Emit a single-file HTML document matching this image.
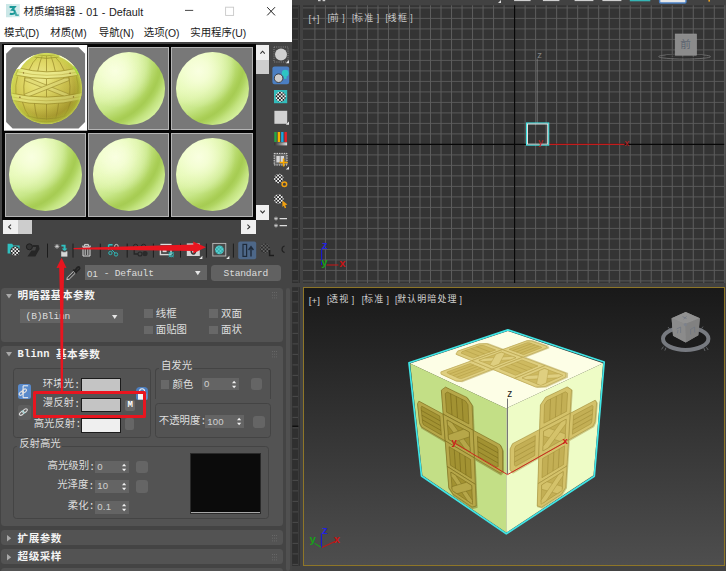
<!DOCTYPE html>
<html><head><meta charset="utf-8"><title>材质编辑器 - 01 - Default</title>
<style>
html,body{margin:0;padding:0;}
body{width:726px;height:571px;position:relative;overflow:hidden;background:#333;font-family:"Liberation Sans",sans-serif;}
div{position:absolute;box-sizing:border-box;}
svg{position:absolute;overflow:visible;}
.l{display:flex;align-items:center;white-space:nowrap;}
.l span{flex:none;display:block;line-height:1;}
.fmono{font-family:"Liberation Mono",monospace;}
.fsans{font-family:"Liberation Sans",sans-serif;}
.fserif{font-family:"Liberation Serif",serif;}
.l span.fcjk{font-family:"Liberation Sans","Noto Sans CJK SC",sans-serif;position:relative;top:-0.5px;}
</style></head><body>
<div style="left:0px;top:0px;width:292.1px;height:571px;background:#444"></div>
<div style="left:0px;top:0px;width:292.1px;height:41.7px;background:#fff"></div>
<svg style="left:5.5px;top:4.4px" width="13.8" height="13.2" viewBox="0 0 13.8 13.2">
<rect width="13.8" height="13.2" fill="#d4ecec"/><rect x="0" y="0" width="6" height="13.2" fill="#c4e4e4" opacity=".6"/>
<path d="M3.6 2.9 L8.6 2.9 L6.2 5.8 Q9.2 6 8.8 8.4 Q8.2 10.6 3.8 9.7" fill="none" stroke="#1a9898" stroke-width="2"/>
<path d="M9.9 8.4 V11.2 H12.8" fill="none" stroke="#1a9898" stroke-width="1.3"/></svg>
<div class="l" style="left:23.4px;top:4.6px;height:16px;color:#1a1a1a;"><span class="fcjk" style="font-size:10.4px">材质编辑器</span><span class="fsans" style="font-size:10.8px;letter-spacing:0px;word-spacing:0.6px;">&nbsp;-&nbsp;01&nbsp;-&nbsp;Default</span></div>
<svg style="left:180px;top:0" width="112" height="24" viewBox="180 0 112 24"><path d="M185 10.4H193.2" stroke="#333" stroke-width="0.9"/><rect x="225.6" y="7.2" width="8" height="8.2" fill="none" stroke="#c8c8c8" stroke-width="0.9"/><path d="M267.2 7.2 L275 15.4 M275 7.2 L267.2 15.4" stroke="#222" stroke-width="1"/></svg>
<div class="l" style="left:4.1px;top:26px;height:16px;color:#1a1a1a;"><span class="fcjk" style="font-size:10.4px">模式</span><span class="fsans" style="font-size:10.4px;letter-spacing:0px;">(D)</span></div>
<div class="l" style="left:50.3px;top:26px;height:16px;color:#1a1a1a;"><span class="fcjk" style="font-size:10.4px">材质</span><span class="fsans" style="font-size:10.4px;letter-spacing:0px;">(M)</span></div>
<div class="l" style="left:98.8px;top:26px;height:16px;color:#1a1a1a;"><span class="fcjk" style="font-size:10.4px">导航</span><span class="fsans" style="font-size:10.4px;letter-spacing:0px;">(N)</span></div>
<div class="l" style="left:143.8px;top:26px;height:16px;color:#1a1a1a;"><span class="fcjk" style="font-size:10.4px">选项</span><span class="fsans" style="font-size:10.4px;letter-spacing:0px;">(O)</span></div>
<div class="l" style="left:190.3px;top:26px;height:16px;color:#1a1a1a;"><span class="fcjk" style="font-size:10.4px">实用程序</span><span class="fsans" style="font-size:10.4px;letter-spacing:0px;">(U)</span></div>
<div style="left:2.3px;top:43.7px;width:253.4px;height:176.2px;background:#050505"></div>
<div style="left:88.4px;top:47px;width:81px;height:83.4px;background:#787878;border:1px solid #b4b4b4"></div>
<div style="left:92.5px;top:52.4px;width:72.8px;height:72.8px;border-radius:50%;background:radial-gradient(circle at 31% 26%, rgba(249,255,224,1) 0%, rgba(247,255,218,0.85) 14%, rgba(244,255,210,0.45) 30%, rgba(240,255,200,0) 50%),radial-gradient(circle 94.6px at -2% 5%, #eafcc0 12.5%, #e3f8b1 36.5%, #d8f1a0 49.2%, #c8e789 59.2%, #b5d869 67.2%, #aacf57 71.8%, #a6cc53 74.4%, #afd460 78.2%, #c2e27e 83.2%, #d3ef9a 89.8%);"></div>
<div style="left:171.4px;top:47px;width:82px;height:83.4px;background:#787878;border:1px solid #b4b4b4"></div>
<div style="left:176px;top:52.4px;width:72.8px;height:72.8px;border-radius:50%;background:radial-gradient(circle at 31% 26%, rgba(249,255,224,1) 0%, rgba(247,255,218,0.85) 14%, rgba(244,255,210,0.45) 30%, rgba(240,255,200,0) 50%),radial-gradient(circle 94.6px at -2% 5%, #eafcc0 12.5%, #e3f8b1 36.5%, #d8f1a0 49.2%, #c8e789 59.2%, #b5d869 67.2%, #aacf57 71.8%, #a6cc53 74.4%, #afd460 78.2%, #c2e27e 83.2%, #d3ef9a 89.8%);"></div>
<div style="left:5px;top:132.9px;width:81.2px;height:84px;background:#787878;border:1px solid #b4b4b4"></div>
<div style="left:9.2px;top:138.2px;width:72.8px;height:72.8px;border-radius:50%;background:radial-gradient(circle at 31% 26%, rgba(249,255,224,1) 0%, rgba(247,255,218,0.85) 14%, rgba(244,255,210,0.45) 30%, rgba(240,255,200,0) 50%),radial-gradient(circle 94.6px at -2% 5%, #eafcc0 12.5%, #e3f8b1 36.5%, #d8f1a0 49.2%, #c8e789 59.2%, #b5d869 67.2%, #aacf57 71.8%, #a6cc53 74.4%, #afd460 78.2%, #c2e27e 83.2%, #d3ef9a 89.8%);"></div>
<div style="left:88.4px;top:132.9px;width:81px;height:84px;background:#787878;border:1px solid #b4b4b4"></div>
<div style="left:92.5px;top:138.2px;width:72.8px;height:72.8px;border-radius:50%;background:radial-gradient(circle at 31% 26%, rgba(249,255,224,1) 0%, rgba(247,255,218,0.85) 14%, rgba(244,255,210,0.45) 30%, rgba(240,255,200,0) 50%),radial-gradient(circle 94.6px at -2% 5%, #eafcc0 12.5%, #e3f8b1 36.5%, #d8f1a0 49.2%, #c8e789 59.2%, #b5d869 67.2%, #aacf57 71.8%, #a6cc53 74.4%, #afd460 78.2%, #c2e27e 83.2%, #d3ef9a 89.8%);"></div>
<div style="left:171.4px;top:132.9px;width:82px;height:84px;background:#787878;border:1px solid #b4b4b4"></div>
<div style="left:176px;top:138.2px;width:72.8px;height:72.8px;border-radius:50%;background:radial-gradient(circle at 31% 26%, rgba(249,255,224,1) 0%, rgba(247,255,218,0.85) 14%, rgba(244,255,210,0.45) 30%, rgba(240,255,200,0) 50%),radial-gradient(circle 94.6px at -2% 5%, #eafcc0 12.5%, #e3f8b1 36.5%, #d8f1a0 49.2%, #c8e789 59.2%, #b5d869 67.2%, #aacf57 71.8%, #a6cc53 74.4%, #afd460 78.2%, #c2e27e 83.2%, #d3ef9a 89.8%);"></div>
<svg style="left:3.6px;top:45.3px" width="83.2" height="85.7" viewBox="0 0 83.2 85.7">
<rect width="83.2" height="85.7" fill="#fff"/>
<path d="M8.6 2.3 H74.6 L81.1 8.8 V76.9 L74.6 83.4 H8.6 L2.1 76.9 V8.8 Z" fill="#787878"/></svg>
<svg id="crate" style="left:9.9px;top:52.2px" width="73" height="73" viewBox="-36.5 -36.5 73 73"><defs>
<radialGradient id="cs1" cx="-6" cy="-10" r="46" gradientUnits="userSpaceOnUse">
<stop offset="0" stop-color="#eeea8e"/><stop offset="0.35" stop-color="#e0d866"/><stop offset="0.65" stop-color="#cfc44e"/><stop offset="0.85" stop-color="#b3a636"/><stop offset="1" stop-color="#a0922a"/></radialGradient>
<radialGradient id="cs2" cx="0" cy="0" r="35.8" gradientUnits="userSpaceOnUse">
<stop offset="0.78" stop-color="#c8e040" stop-opacity="0"/><stop offset="0.93" stop-color="#c4e048" stop-opacity=".35"/><stop offset="1" stop-color="#d4ee70" stop-opacity=".7"/></radialGradient>
<linearGradient id="cs3" x1="0" y1="0" x2="1" y2="1"><stop offset="0.45" stop-color="#8c7e20" stop-opacity="0"/><stop offset="1" stop-color="#8c7e20" stop-opacity=".55"/></linearGradient>
<clipPath id="csc"><circle r="35.8"/></clipPath>
</defs>
<g clip-path="url(#csc)">
<circle r="35.8" fill="url(#cs1)"/>
<!-- top planks -->
<g stroke="#93842a" stroke-width="0.7" fill="none">
<path d="M-17.5 -18.4 Q-14 -27 -8.6 -31.6"/><path d="M-8.8 -17.2 Q-7 -26 -4.4 -32.4"/><path d="M0 -16.7 V-32.8"/><path d="M8.8 -17.2 Q7 -26 4.4 -32.4"/><path d="M17.5 -18.4 Q14 -27 8.6 -31.6"/>
<path d="M-12 -31.4 Q0 -29 12 -31.4" stroke-width="0.9"/><path d="M-9 -33.6 Q0 -31.8 9 -33.6" stroke="#8c7e22"/>
</g>
<!-- middle panel: verticals + X -->
<g stroke="#93842a" stroke-width="0.7" fill="none">
<path d="M0 -10 V9"/><path d="M-21.6 -11.4 Q-23.4 -2 -22.4 6.4"/><path d="M22.4 -11.4 Q24.2 -2 23.2 6.4"/>
<path d="M-29 -12 Q-31.6 -3 -30.6 5.4"/><path d="M30 -12 Q32.6 -3 31.4 5.4"/>
</g>
<g fill="#e2dc76" stroke="#93842a" stroke-width="0.6">
<path d="M-21.4 -10.6 L-17.4 -10.4 L22.6 5.6 L22.8 8 L18.6 8.2 L-21.8 -8 Z"/>
<path d="M22.2 -10.6 L18.2 -10.4 L-21.8 5.6 L-22 8 L-17.8 8.2 L22.6 -8 Z"/>
</g>
<!-- upper band -->
<path d="M-27.6 -20.6 Q0 -13.2 28.2 -19.8 L31.4 -13.2 Q0 -6.6 -30.8 -13.4 Z" fill="#eae888" stroke="#9c8e2a" stroke-width="0.75"/>
<path d="M-29 -16.8 Q0 -9.8 29.8 -16.2" fill="none" stroke="#b4a63c" stroke-width="0.5"/>
<!-- lower band -->
<path d="M-35.6 4.6 Q0 12.8 35.6 4.2 L34.6 11.2 Q0 19.6 -34.4 11.8 Z" fill="#e2df78" stroke="#9c8e2a" stroke-width="0.75"/>
<path d="M-35 8.4 Q0 16.4 35 8" fill="none" stroke="#b4a63c" stroke-width="0.5"/>
<!-- rivets -->
<g fill="#7a5a20"><circle cx="-23" cy="-15.6" r="0.7"/><circle cx="23.6" cy="-15.2" r="0.7"/><circle cx="-26.6" cy="8.8" r="0.7"/><circle cx="27" cy="8.4" r="0.7"/></g>
<!-- bottom planks -->
<g stroke="#93842a" stroke-width="0.7" fill="none">
<path d="M-24 13.6 Q-22 22 -17 28.4"/><path d="M-12 15 Q-11.4 23 -9 30.6"/><path d="M0 15.6 V31.6"/><path d="M12 15 Q11.4 23 9 30.6"/><path d="M24 13.6 Q22 22 17 28.4"/>
<path d="M-20 27.2 Q0 33.6 20 27.2" stroke-width="0.9"/><path d="M-15 31.2 Q0 35.8 15 31.2" stroke="#8c7e22"/>
</g>
<circle r="35.8" fill="url(#cs3)"/>
<circle r="35.8" fill="url(#cs2)"/>
<!-- white highlights -->
<path d="M-30.2 -19.2 Q-23 -30.4 -10.6 -34.2 Q-21 -28.6 -26.4 -19.4 Z" fill="#fff" opacity=".95"/>
<path d="M13 -33.4 Q24 -29 30.4 -18.8 L28 -21.2 Q22 -28 13 -31.8 Z" fill="#fbffd8" opacity=".9"/>
<path d="M26 -21 Q29.4 -18 30.4 -14.4 L32.8 -14.6 Q31 -19.6 27.6 -22.8 Z" fill="#a8e040" opacity=".9"/>
</g>
</svg>
<div style="left:255.8px;top:45.3px;width:13.1px;height:14.3px;background:#f0f0f0"></div>
<div style="left:255.8px;top:59.6px;width:13.1px;height:14px;background:#cdcdcd"></div>
<div style="left:255.8px;top:204.6px;width:13.1px;height:15.2px;background:#f0f0f0"></div>
<svg style="left:255.8px;top:45.3px" width="13.1" height="175" viewBox="0 0 13.1 175"><path d="M4.4 8.6 L6.6 6.2 L8.8 8.6 M4.4 165.6 L6.6 168 L8.8 165.6" fill="none" stroke="#333" stroke-width="1.1"/></svg>
<div style="left:3.1px;top:219.8px;width:14.5px;height:14px;background:#f0f0f0"></div>
<div style="left:17.6px;top:219.8px;width:14.4px;height:14px;background:#cdcdcd"></div>
<div style="left:241.3px;top:219.8px;width:14.5px;height:14px;background:#f0f0f0"></div>
<svg style="left:0;top:219.8px" width="260" height="14" viewBox="0 0 260 14"><path d="M11 4.6 L8.6 6.9 L11 9.2 M247.4 4.6 L249.8 6.9 L247.4 9.2" fill="none" stroke="#333" stroke-width="1.1"/></svg>
<svg style="left:270px;top:44px" width="22" height="190" viewBox="270 44 22 190"><defs><pattern id="chk" width="3.6" height="3.6" patternUnits="userSpaceOnUse"><rect width="3.6" height="3.6" fill="#f4f4f4"/><rect width="1.8" height="1.8" fill="#222"/><rect x="1.8" y="1.8" width="1.8" height="1.8" fill="#222"/></pattern>
<linearGradient id="gg" x1="0" x2="1"><stop offset="0" stop-color="#333"/><stop offset="1" stop-color="#ddd"/></linearGradient></defs>
<rect x="274" y="47" width="14" height="15" fill="none" stroke="#999" stroke-width="0.8" stroke-dasharray="1 1.2"/>
<circle cx="281" cy="54.4" r="6" fill="#cfcfcf"/>
<path d="M289 60 V63.2 H285.8 Z" fill="#e8e8e8"/>
<rect x="272.4" y="66.4" width="16.8" height="17.8" rx="2.2" fill="#4b7fc3"/>
<circle cx="285.2" cy="73.2" r="3.4" fill="#2ec4c4"/><rect x="283.9" y="76.2" width="2.6" height="2.6" fill="#2ec4c4"/>
<circle cx="278.6" cy="78.2" r="4.3" fill="#cdcdcd" stroke="#333" stroke-width="0.9"/>
<rect x="274" y="90" width="13.2" height="13.2" fill="#32bcbc"/>
<circle cx="280.6" cy="96.6" r="5.2" fill="url(#chk)"/>
<rect x="274.4" y="110.8" width="12.8" height="13" fill="#d2d2d2"/>
<path d="M289 121.6 V124.8 H285.8 Z" fill="#e8e8e8"/>
<rect x="274.3" y="132" width="2.4" height="10" fill="#25a545"/><rect x="277.7" y="132" width="2.4" height="10" fill="#f8b400"/>
<rect x="281.1" y="132" width="2.4" height="10" fill="#18a8e0"/><rect x="284.5" y="132" width="2.4" height="10" fill="#e8202a"/>
<rect x="274.3" y="142.4" width="12.8" height="3" fill="url(#gg)"/>
<rect x="274.2" y="153.4" width="12.8" height="11.6" fill="#666" stroke="#ddd" stroke-width="1" stroke-dasharray="1.4 1"/>
<rect x="276.4" y="156" width="3.4" height="6.4" fill="#d8d8d8"/><rect x="280.6" y="156" width="3.4" height="6.4" fill="#d8d8d8"/>
<path d="M283.6 158.4 V166.4 M279.6 162.4 H287.6" stroke="#f8a800" stroke-width="1.5"/>
<path d="M289 166.4 V169.6 H285.8 Z" fill="#e8e8e8"/>
<circle cx="278.8" cy="178.6" r="4.8" fill="url(#chk)"/>
<circle cx="284.4" cy="184.2" r="2.3" fill="none" stroke="#f0a010" stroke-width="1.5"/>
<circle cx="278.8" cy="199" r="4.8" fill="url(#chk)"/>
<path d="M282.4 200.6 L287.4 204.6 L285.2 205.2 L286.2 207.8 L284.8 208.2 L283.8 205.8 L282.4 207 Z" fill="#f0a010"/>
<path d="M279.6 218.6 H287 M279.6 225.6 H287" stroke="#ddd" stroke-width="1.3"/>
<path d="M274 218.6 H278 M276 216.6 V220.6 M274.6 217.2 L277.4 220 M277.4 217.2 L274.6 220 M274 225.6 H278 M276 223.6 V227.6 M274.6 224.2 L277.4 227 M277.4 224.2 L274.6 227" stroke="#ddd" stroke-width="0.6"/>
</svg>
<svg style="left:0;top:238px" width="292" height="24" viewBox="0 238 292 24"><defs><pattern id="chk2" width="3.6" height="3.6" patternUnits="userSpaceOnUse"><rect width="3.6" height="3.6" fill="#f4f4f4"/><rect width="1.8" height="1.8" fill="#222"/><rect x="1.8" y="1.8" width="1.8" height="1.8" fill="#222"/></pattern></defs>
<g stroke="#1c1c1c" stroke-width="1"><path d="M47.5 243.6V257.6M73 243.6V257.6M100.3 243.6V257.6M127.2 243.6V257.6M153.4 243.6V257.6M180.5 243.6V257.6M206.4 243.6V257.6M233.4 243.6V257.6"/></g>
<!-- get material -->
<path d="M7.6 243.8 H12.2 L13.2 245.4 H19.6 V253.6 H7.6 Z" fill="#2fc0c0"/>
<circle cx="15.2" cy="251.2" r="5" fill="#333"/><circle cx="15.2" cy="251.2" r="4.5" fill="url(#chk2)"/>
<!-- put to scene (disabled) -->
<circle cx="29.4" cy="246.8" r="3" fill="#333" stroke="#1e1e1e" stroke-width="1"/>
<path d="M32.6 245 H38.6 L39.6 249 L35.4 256.4 H27.4 L31.6 250.6 H35.2 L36.2 247 H32.6 Z" fill="#262626"/>
<!-- assign -->
<path d="M54.6 246.4 H59.4 M57 244 V248.8 M55.3 244.7 L58.7 248.1 M58.7 244.7 L55.3 248.1" stroke="#ddd" stroke-width="0.7"/>
<path d="M61.4 244.8 H65.6 V248.4 H67.4 L64.6 251.6 L61.8 248.4 H63.6 V246.6 H61.4 Z" fill="#2fc0c0"/>
<rect x="61.2" y="251.4" width="6.2" height="5.2" fill="#d8d8d8"/><rect x="62.6" y="250.6" width="3.2" height="1.6" fill="#555"/>
<!-- trash -->
<path d="M82 246.2 H91 M84.6 246 V244.4 H88.4 V246" fill="none" stroke="#d8d8d8" stroke-width="1"/>
<path d="M83 247.4 H90 V256 H83 Z" fill="none" stroke="#d8d8d8" stroke-width="1"/><path d="M85.2 248.6 V255 M87.8 248.6 V255" stroke="#d8d8d8" stroke-width="0.9"/>
<!-- reset map -->
<path d="M108.6 244.8 H112.6 M108.6 244.8 V250" stroke="#2fc0c0" stroke-width="1.4" fill="none"/>
<circle cx="110.4" cy="253" r="1.7" fill="none" stroke="#2fc0c0" stroke-width="0.9"/><circle cx="116" cy="254.4" r="1.7" fill="none" stroke="#2fc0c0" stroke-width="0.9"/>
<path d="M109.4 247.4 L115.2 253.2" stroke="#2fc0c0" stroke-width="0.9"/>
<circle cx="116.4" cy="246.2" r="1.8" fill="none" stroke="#ddd" stroke-width="0.8"/>
<!-- make unique (disabled) -->
<circle cx="135.6" cy="246.4" r="2.2" fill="none" stroke="#262626" stroke-width="1"/><circle cx="143.6" cy="246.4" r="2.2" fill="none" stroke="#262626" stroke-width="1"/>
<path d="M134.2 249 V254 H138 " fill="none" stroke="#262626" stroke-width="1.3"/>
<circle cx="140" cy="254" r="2" fill="none" stroke="#262626" stroke-width="1.1"/><circle cx="145" cy="253.6" r="2.6" fill="#2a2a2a"/>
<!-- put to library -->
<path d="M160.4 244.4 H171.6" stroke="#ddd" stroke-width="1.2"/>
<rect x="160.4" y="246.6" width="10.6" height="8" fill="none" stroke="#d8d8d8" stroke-width="1.4"/><rect x="162.6" y="248.8" width="4" height="3.4" fill="#d8d8d8"/>
<circle cx="171.2" cy="254.6" r="2.2" fill="none" stroke="#2fc0c0" stroke-width="0.9"/><path d="M168.6 252 L173.8 257.2 M173.8 252 L168.6 257.2" stroke="#2fc0c0" stroke-width="0.7"/>
<!-- material id channel -->
<rect x="186.8" y="243.4" width="13" height="12.6" fill="#d6d6d6"/>
<ellipse cx="193.4" cy="250.6" rx="2.2" ry="3.4" fill="none" stroke="#333" stroke-width="1.5"/>
<path d="M202.4 255.8 V259 H199.2 Z" fill="#e8e8e8"/>
<!-- show shaded -->
<rect x="212.8" y="243.4" width="13" height="12.6" fill="#4a4a4a" stroke="#bdbdbd" stroke-width="0.9"/>
<circle cx="219.4" cy="249.8" r="4.4" fill="#38c8c8"/><circle cx="219.4" cy="249.8" r="4.4" fill="url(#chk2)" opacity="0.18"/>
<path d="M229.4 255.8 V259 H226.2 Z" fill="#e8e8e8"/>
<!-- go to parent (highlighted) -->
<rect x="238.2" y="241.6" width="18" height="17.6" rx="2" fill="#4d6788"/>
<rect x="243" y="244.4" width="3.6" height="12" fill="none" stroke="#1e2a3a" stroke-width="1.2"/>
<path d="M251 256.6 V248 M248.6 250 L251 246.6 L253.4 250" fill="none" stroke="#1e2a3a" stroke-width="1.4"/>
<!-- go forward -->
<circle cx="265" cy="248.2" r="4.8" fill="#2a2a2a"/><circle cx="265" cy="248.2" r="4.8" fill="url(#chk2)" opacity=".28"/>
<path d="M269.6 250 V255.4 H274" fill="none" stroke="#1c1c1c" stroke-width="1.5"/>
<path d="M284.6 246 A3.4 3.4 0 0 0 284.6 252.6" fill="none" stroke="#222" stroke-width="1.2"/>
</svg>
<svg style="left:64px;top:264px" width="18" height="18" viewBox="64 264 18 18">
<path d="M66.8 279.6 L67.4 277.4 L73.6 271.2 L75.4 273 L69.2 279.2 Z" fill="none" stroke="#d0d0d0" stroke-width="0.9"/>
<path d="M73.2 269.6 L76.8 273.2 M74.6 271 L77.4 267.4 Q78.8 266.4 79.4 267.4 Q80 268.4 79 269.4 L75.6 272.4" stroke="#222" stroke-width="1.8" fill="none"/></svg>
<div style="left:85px;top:265px;width:122.4px;height:15.4px;background:#646464"></div>
<div class="l" style="left:87px;top:266.4px;height:14px;color:#dcdcdc;"><span class="fsans" style="font-size:9.6px;letter-spacing:0.22px;">01</span><span class="fmono" style="font-size:9.6px;letter-spacing:-0.2px;">&nbsp;-&nbsp;Default</span></div>
<svg style="left:195.4px;top:270.8px" width="5.6" height="4.4" viewBox="0 0 5.6 4.4"><path d="M0 0H5.6L2.8 4.2Z" fill="#e6e6e6"/></svg>
<div style="left:211px;top:265px;width:70.2px;height:16px;background:#616161;border-radius:3.5px"></div>
<div class="l" style="left:223.6px;top:267.2px;height:14px;color:#dcdcdc;"><span class="fmono" style="font-size:9.6px;letter-spacing:-0.2px;">Standard</span></div>
<div style="left:1.2px;top:288.3px;width:282.2px;height:53.3px;background:#535353;border-radius:3.5px;"></div>
<div style="left:1.2px;top:345.8px;width:282.2px;height:180.4px;background:#535353;border-radius:3.5px;"></div>
<div style="left:1.2px;top:529.8px;width:282.2px;height:15.3px;background:#535353;border-radius:3.5px;"></div>
<div style="left:1.2px;top:548.6px;width:282.2px;height:15.2px;background:#535353;border-radius:3.5px;"></div>
<div style="left:1.2px;top:567.6px;width:282.2px;height:10px;background:#535353;border-radius:3.5px;"></div>
<div style="left:285.6px;top:288px;width:4.6px;height:283px;background:#505050;border-radius:2px"></div>
<svg style="left:6.2px;top:293.6px" width="6" height="5" viewBox="0 0 6 5"><path d="M0 0H6L3 4.6Z" fill="#a8a8a8"/></svg>
<div class="l" style="left:17.6px;top:289px;height:14px;color:#f4f4f4;"><span class="fcjk" style="font-size:10.6px;font-weight:bold;letter-spacing:0.5px;">明暗器基本参数</span></div>
<svg style="left:271.8px;top:292.2px" width="5" height="6.4" viewBox="0 0 5 6.4"><g fill="#686868"><rect x="0" y="0" width="1" height="1"/><rect x="2" y="0" width="1" height="1"/><rect x="4" y="0" width="1" height="1"/><rect x="0" y="2.7" width="1" height="1"/><rect x="2" y="2.7" width="1" height="1"/><rect x="4" y="2.7" width="1" height="1"/><rect x="0" y="5.4" width="1" height="1"/><rect x="2" y="5.4" width="1" height="1"/><rect x="4" y="5.4" width="1" height="1"/></g></svg>
<svg style="left:6.2px;top:352.2px" width="6" height="5" viewBox="0 0 6 5"><path d="M0 0H6L3 4.6Z" fill="#a8a8a8"/></svg>
<div class="l" style="left:17.6px;top:347.6px;height:14px;color:#f4f4f4;"><span class="fmono" style="font-size:10.4px;letter-spacing:0.16px;font-weight:bold;">Blinn&nbsp;</span><span class="fcjk" style="font-size:10.6px;font-weight:bold;letter-spacing:0.5px;">基本参数</span></div>
<svg style="left:271.8px;top:350.6px" width="5" height="6.4" viewBox="0 0 5 6.4"><g fill="#686868"><rect x="0" y="0" width="1" height="1"/><rect x="2" y="0" width="1" height="1"/><rect x="4" y="0" width="1" height="1"/><rect x="0" y="2.7" width="1" height="1"/><rect x="2" y="2.7" width="1" height="1"/><rect x="4" y="2.7" width="1" height="1"/><rect x="0" y="5.4" width="1" height="1"/><rect x="2" y="5.4" width="1" height="1"/><rect x="4" y="5.4" width="1" height="1"/></g></svg>
<svg style="left:7px;top:535px" width="4.4" height="6.4" viewBox="0 0 4.4 6.4"><path d="M0 0V6.4L4.2 3.2Z" fill="#a8a8a8"/></svg>
<div class="l" style="left:17.6px;top:531.4px;height:14px;color:#f4f4f4;"><span class="fcjk" style="font-size:10.6px;font-weight:bold;letter-spacing:0.5px;">扩展参数</span></div>
<svg style="left:271.8px;top:535px" width="5" height="6.4" viewBox="0 0 5 6.4"><g fill="#686868"><rect x="0" y="0" width="1" height="1"/><rect x="2" y="0" width="1" height="1"/><rect x="4" y="0" width="1" height="1"/><rect x="0" y="2.7" width="1" height="1"/><rect x="2" y="2.7" width="1" height="1"/><rect x="4" y="2.7" width="1" height="1"/><rect x="0" y="5.4" width="1" height="1"/><rect x="2" y="5.4" width="1" height="1"/><rect x="4" y="5.4" width="1" height="1"/></g></svg>
<svg style="left:7px;top:553.6px" width="4.4" height="6.4" viewBox="0 0 4.4 6.4"><path d="M0 0V6.4L4.2 3.2Z" fill="#a8a8a8"/></svg>
<div class="l" style="left:17.6px;top:550px;height:14px;color:#f4f4f4;"><span class="fcjk" style="font-size:10.6px;font-weight:bold;letter-spacing:0.5px;">超级采样</span></div>
<svg style="left:271.8px;top:553.6px" width="5" height="6.4" viewBox="0 0 5 6.4"><g fill="#686868"><rect x="0" y="0" width="1" height="1"/><rect x="2" y="0" width="1" height="1"/><rect x="4" y="0" width="1" height="1"/><rect x="0" y="2.7" width="1" height="1"/><rect x="2" y="2.7" width="1" height="1"/><rect x="4" y="2.7" width="1" height="1"/><rect x="0" y="5.4" width="1" height="1"/><rect x="2" y="5.4" width="1" height="1"/><rect x="4" y="5.4" width="1" height="1"/></g></svg>
<div style="left:20px;top:309.3px;width:103px;height:13.8px;background:#646464"></div>
<div class="l" style="left:25.6px;top:310.2px;height:14px;color:#dcdcdc;"><span class="fmono" style="font-size:9.6px;letter-spacing:-0.2px;">(B)Blinn</span></div>
<svg style="left:111.6px;top:314.6px" width="5.4" height="4.2" viewBox="0 0 5.4 4.2"><path d="M0 0H5.4L2.7 4Z" fill="#e6e6e6"/></svg>
<div style="left:144px;top:309.3px;width:8.6px;height:8.4px;background:#686868;"></div>
<div class="l" style="left:155.8px;top:307.7px;height:14px;color:#dedede;"><span class="fcjk" style="font-size:10.4px">线框</span></div>
<div style="left:209.2px;top:309.3px;width:8.6px;height:8.4px;background:#686868;"></div>
<div class="l" style="left:221px;top:307.7px;height:14px;color:#dedede;"><span class="fcjk" style="font-size:10.4px">双面</span></div>
<div style="left:144px;top:325.8px;width:8.6px;height:8.4px;background:#686868;"></div>
<div class="l" style="left:155.8px;top:324.2px;height:14px;color:#dedede;"><span class="fcjk" style="font-size:10.4px">面贴图</span></div>
<div style="left:209.2px;top:325.8px;width:8.6px;height:8.4px;background:#686868;"></div>
<div class="l" style="left:221px;top:324.2px;height:14px;color:#dedede;"><span class="fcjk" style="font-size:10.4px">面状</span></div>
<div style="left:13.4px;top:367.8px;width:137.4px;height:69.8px;border:1px solid #444;border-radius:3.5px;"></div>
<div style="left:155.3px;top:367.6px;width:115.4px;height:31px;border:1px solid #444;border-radius:3.5px;border-bottom:none;border-radius:3.5px 3.5px 0 0;"></div>
<div style="left:159.4px;top:362px;width:34px;height:10px;background:#535353"></div>
<div class="l" style="left:160.9px;top:360.2px;height:14px;color:#dedede;"><span class="fcjk" style="font-size:10.4px">自发光</span></div>
<div style="left:155.3px;top:403.2px;width:115.4px;height:35.2px;border:1px solid #444;border-radius:3.5px;"></div>
<div style="left:17.9px;top:383.6px;width:13.6px;height:15.3px;background:#598acb;border-radius:2.5px"></div>
<svg style="left:17.9px;top:383.6px" width="13.6" height="15.3" viewBox="17.9 383.6 13.6 15.3">
<path d="M28 385.4 H23 V397.3 H28" fill="none" stroke="#f4f4f4" stroke-width="1"/>
<g fill="none" stroke="#e0e0e0" stroke-width="1.1"><ellipse cx="21.3" cy="392.9" rx="2.5" ry="1.5" transform="rotate(-40 21.3 392.9)"/><ellipse cx="24.2" cy="390.5" rx="2.5" ry="1.5" transform="rotate(-40 24.2 390.5)"/></g></svg>
<div style="left:17.9px;top:405px;width:13.6px;height:14.6px;background:#5d5d5d;border-radius:2.5px"></div>
<svg style="left:17.9px;top:405px" width="13.6" height="14.6" viewBox="17.9 405 13.6 14.6">
<g fill="none" stroke="#d8d8d8" stroke-width="1.1"><ellipse cx="21.6" cy="413.3" rx="2.6" ry="1.5" transform="rotate(-38 21.6 413.3)"/><ellipse cx="24.9" cy="410.8" rx="2.6" ry="1.5" transform="rotate(-38 24.9 410.8)"/></g>
<path d="M22 410.6 L24.6 413.6" stroke="#35c8c8" stroke-width="0.9" stroke-dasharray="1 0.7"/></svg>
<div class="l" style="left:42.8px;top:378px;height:14px;color:#dedede;"><span class="fcjk" style="font-size:10.4px">环境光</span><span class="fmono" style="font-size:10.4px;letter-spacing:0px;">:</span></div>
<div style="left:80.6px;top:378.2px;width:40.4px;height:14.4px;background:#c4c4c4;border:1px solid #1c1c1c;"></div>
<div class="l" style="left:33.7px;top:417.6px;height:14px;color:#dedede;"><span class="fcjk" style="font-size:10.4px">高光反射</span><span class="fmono" style="font-size:10.4px;letter-spacing:0px;">:</span></div>
<div style="left:80.6px;top:417.8px;width:40.4px;height:14.8px;background:#efefef;border:1px solid #1c1c1c;"></div>
<div style="left:125px;top:418px;width:8.8px;height:11.6px;background:#666;border-radius:2px"></div>
<div style="left:136.1px;top:387.4px;width:12.2px;height:13px;background:#4d7ebd;border-radius:4px 4px 2px 2px"></div>
<svg style="left:136.1px;top:387.4px" width="12.2" height="13" viewBox="0 0 12.2 13"><path d="M3.6 6.6 V4.2 A2.5 2.5 0 0 1 8.6 4.2 V6.6" fill="none" stroke="#f4f4f4" stroke-width="1.1"/><rect x="2" y="6.6" width="8.2" height="6" fill="#f4f4f4"/></svg>
<div style="left:32.9px;top:390.6px;width:112.8px;height:27px;border:3.6px solid #e8151f;border-radius:1.6px"></div>
<div class="l" style="left:42.8px;top:396.8px;height:14px;color:#dedede;"><span class="fcjk" style="font-size:10.4px">漫反射</span><span class="fmono" style="font-size:10.4px;letter-spacing:0px;">:</span></div>
<div style="left:80.6px;top:397.8px;width:40.4px;height:14.6px;background:#c4c4c4;border:1px solid #1c1c1c;"></div>
<div style="left:125px;top:400px;width:10.4px;height:11.4px;background:#686868;border-radius:2px"></div>
<div class="l" style="left:127.5px;top:398.8px;height:14px;color:#fff;"><span class="fmono" style="font-size:9px;letter-spacing:0px;font-weight:bold;">M</span></div>
<div style="left:161.1px;top:380.3px;width:8.2px;height:8.4px;background:#686868;"></div>
<div class="l" style="left:172.6px;top:378.4px;height:14px;color:#dedede;"><span class="fcjk" style="font-size:10.4px">颜色</span></div>
<div style="left:201.9px;top:378px;width:37px;height:12.4px;background:#646464"></div>
<div class="l" style="left:204.1px;top:376.9px;height:14px;color:#d0d0d0;"><span class="fsans" style="font-size:9.6px;letter-spacing:0.22px;">0</span></div>
<svg style="left:231.9px;top:379.8px" width="4.2" height="9" viewBox="0 0 4.2 9"><path d="M0 3.3 L2.1 0.7 L4.2 3.3Z M0 5.7 L2.1 8.3 L4.2 5.7Z" fill="#f0f0f0"/></svg>
<div style="left:251px;top:378.2px;width:11px;height:12.2px;background:#656565;border-radius:3px;"></div>
<div class="l" style="left:158.8px;top:414.5px;height:14px;color:#dedede;"><span class="fcjk" style="font-size:10.4px">不透明度</span><span class="fmono" style="font-size:10.4px;letter-spacing:0px;">:</span></div>
<div style="left:205px;top:415.4px;width:39px;height:12.4px;background:#646464"></div>
<div class="l" style="left:207.2px;top:414.3px;height:14px;color:#d0d0d0;"><span class="fsans" style="font-size:9.6px;letter-spacing:0.22px;">100</span></div>
<svg style="left:237px;top:417.2px" width="4.2" height="9" viewBox="0 0 4.2 9"><path d="M0 3.3 L2.1 0.7 L4.2 3.3Z M0 5.7 L2.1 8.3 L4.2 5.7Z" fill="#f0f0f0"/></svg>
<div style="left:253.4px;top:415.6px;width:11.3px;height:12.4px;background:#656565;border-radius:3px;"></div>
<div style="left:13.4px;top:445.5px;width:255.5px;height:73.6px;border:1px solid #444;border-radius:3.5px;"></div>
<div style="left:17.4px;top:440px;width:45px;height:10px;background:#535353"></div>
<div class="l" style="left:19.2px;top:438.2px;height:14px;color:#dedede;"><span class="fcjk" style="font-size:10.4px">反射高光</span></div>
<div class="l" style="left:47.5px;top:460px;height:14px;color:#dedede;"><span class="fcjk" style="font-size:10.4px">高光级别</span><span class="fmono" style="font-size:10.4px;letter-spacing:0px;">:</span></div>
<div style="left:95px;top:461px;width:34.2px;height:12.2px;background:#646464"></div>
<div class="l" style="left:97.2px;top:459.8px;height:14px;color:#d0d0d0;"><span class="fsans" style="font-size:9.6px;letter-spacing:0.22px;">0</span></div>
<svg style="left:122.2px;top:462.7px" width="4.2" height="9" viewBox="0 0 4.2 9"><path d="M0 3.3 L2.1 0.7 L4.2 3.3Z M0 5.7 L2.1 8.3 L4.2 5.7Z" fill="#f0f0f0"/></svg>
<div style="left:136.4px;top:461px;width:11.6px;height:12.2px;background:#656565;border-radius:3px;"></div>
<div class="l" style="left:57.2px;top:479px;height:14px;color:#dedede;"><span class="fcjk" style="font-size:10.4px">光泽度</span><span class="fmono" style="font-size:10.4px;letter-spacing:0px;">:</span></div>
<div style="left:95px;top:480px;width:34.2px;height:12.6px;background:#646464"></div>
<div class="l" style="left:97.2px;top:479px;height:14px;color:#d0d0d0;"><span class="fsans" style="font-size:9.6px;letter-spacing:0.22px;">10</span></div>
<svg style="left:122.2px;top:481.9px" width="4.2" height="9" viewBox="0 0 4.2 9"><path d="M0 3.3 L2.1 0.7 L4.2 3.3Z M0 5.7 L2.1 8.3 L4.2 5.7Z" fill="#f0f0f0"/></svg>
<div style="left:136.4px;top:480px;width:11.6px;height:12.6px;background:#656565;border-radius:3px;"></div>
<div class="l" style="left:67.8px;top:499.6px;height:14px;color:#dedede;"><span class="fcjk" style="font-size:10.4px">柔化</span><span class="fmono" style="font-size:10.4px;letter-spacing:0px;">:</span></div>
<div style="left:95px;top:500.9px;width:34.2px;height:12.8px;background:#646464"></div>
<div class="l" style="left:97.2px;top:500px;height:14px;color:#d0d0d0;"><span class="fsans" style="font-size:9.6px;letter-spacing:0.22px;">0.1</span></div>
<svg style="left:122.2px;top:502.9px" width="4.2" height="9" viewBox="0 0 4.2 9"><path d="M0 3.3 L2.1 0.7 L4.2 3.3Z M0 5.7 L2.1 8.3 L4.2 5.7Z" fill="#f0f0f0"/></svg>
<div style="left:189.9px;top:452.7px;width:70.7px;height:60.9px;background:#0b0b0b;border:1px solid #2a2a2a"></div>
<div style="left:191px;top:511.6px;width:68.6px;height:1.2px;background:#a8a8a8"></div>
<svg style="left:0;top:236px" width="292" height="160" viewBox="0 236 292 160">
<path d="M73.6 248.1 L193.4 244.4 L193 241.4 L205.9 247.2 L193 253.5 L193.4 251 L73.6 249.2 Z" fill="#e8151f"/>
<path d="M61.6 257.8 L66.5 268.1 L64.2 267.7 L63.7 290 L63.3 316 L63.1 355 L62.9 391.4 L60.8 391.4 L60.5 355 L60.2 316 L59.7 290 L59.2 267.7 L56.5 268.1 Z" fill="#e8151f"/></svg>
<div style="left:292.1px;top:0px;width:433.9px;height:571px;background:#424242"></div>
<svg style="left:0;top:0" width="726" height="571" viewBox="0 0 726 571"><rect x="292.1" y="5.3" width="7.8" height="277.6" fill="#2e2e2e"/><rect x="292.1" y="287.2" width="7.8" height="278.6" fill="#2f2f2f"/><rect x="298" y="5.3" width="1.1" height="277.6" fill="#3b3b3b"/><rect x="298" y="287.2" width="1.1" height="278.6" fill="#3b3b3b"/><path d="M292.5 7.9 H298" stroke="#4a4a4a" stroke-width="1"/><path d="M292.5 18.4 H298" stroke="#4a4a4a" stroke-width="1"/><path d="M292.5 28.9 H298" stroke="#4a4a4a" stroke-width="1"/><path d="M292.5 39.4 H298" stroke="#4a4a4a" stroke-width="1"/><path d="M292.5 49.9 H298" stroke="#4a4a4a" stroke-width="1"/><path d="M292.5 60.4 H298" stroke="#4a4a4a" stroke-width="1"/><path d="M292.5 70.9 H298" stroke="#4a4a4a" stroke-width="1"/><path d="M292.5 81.4 H298" stroke="#4a4a4a" stroke-width="1"/><path d="M292.5 91.9 H298" stroke="#4a4a4a" stroke-width="1"/><path d="M292.5 102.4 H298" stroke="#4a4a4a" stroke-width="1"/><path d="M292.5 112.9 H298" stroke="#4a4a4a" stroke-width="1"/><path d="M292.5 123.4 H298" stroke="#4a4a4a" stroke-width="1"/><path d="M292.5 133.9 H298" stroke="#4a4a4a" stroke-width="1"/><path d="M292.5 144.4 H298" stroke="#4a4a4a" stroke-width="1"/><path d="M292.5 154.9 H298" stroke="#4a4a4a" stroke-width="1"/><path d="M292.5 165.4 H298" stroke="#4a4a4a" stroke-width="1"/><path d="M292.5 175.9 H298" stroke="#4a4a4a" stroke-width="1"/><path d="M292.5 186.4 H298" stroke="#4a4a4a" stroke-width="1"/><path d="M292.5 196.9 H298" stroke="#4a4a4a" stroke-width="1"/><path d="M292.5 207.4 H298" stroke="#4a4a4a" stroke-width="1"/><path d="M292.5 217.9 H298" stroke="#4a4a4a" stroke-width="1"/><path d="M292.5 228.4 H298" stroke="#4a4a4a" stroke-width="1"/><path d="M292.5 238.9 H298" stroke="#4a4a4a" stroke-width="1"/><path d="M292.5 249.4 H298" stroke="#4a4a4a" stroke-width="1"/><path d="M292.5 259.9 H298" stroke="#4a4a4a" stroke-width="1"/><path d="M292.5 270.4 H298" stroke="#4a4a4a" stroke-width="1"/><path d="M292.5 280.9 H298" stroke="#4a4a4a" stroke-width="1"/><path d="M292.5 291.4 H298" stroke="#4a4a4a" stroke-width="1"/><path d="M292.5 301.9 H298" stroke="#4a4a4a" stroke-width="1"/><path d="M292.5 312.4 H298" stroke="#4a4a4a" stroke-width="1"/><path d="M292.5 322.9 H298" stroke="#4a4a4a" stroke-width="1"/><path d="M292.5 333.4 H298" stroke="#4a4a4a" stroke-width="1"/><path d="M292.5 343.9 H298" stroke="#4a4a4a" stroke-width="1"/><path d="M292.5 354.4 H298" stroke="#4a4a4a" stroke-width="1"/><path d="M292.5 364.9 H298" stroke="#4a4a4a" stroke-width="1"/><path d="M292.5 375.4 H298" stroke="#4a4a4a" stroke-width="1"/><path d="M292.5 385.9 H298" stroke="#4a4a4a" stroke-width="1"/><path d="M292.5 396.4 H298" stroke="#4a4a4a" stroke-width="1"/><path d="M292.5 406.9 H298" stroke="#4a4a4a" stroke-width="1"/><path d="M292.5 417.4 H298" stroke="#4a4a4a" stroke-width="1"/><path d="M292.5 427.9 H298" stroke="#4a4a4a" stroke-width="1"/><path d="M292.5 438.4 H298" stroke="#4a4a4a" stroke-width="1"/><path d="M292.5 448.9 H298" stroke="#4a4a4a" stroke-width="1"/><path d="M292.5 459.4 H298" stroke="#4a4a4a" stroke-width="1"/><path d="M292.5 469.9 H298" stroke="#4a4a4a" stroke-width="1"/><path d="M292.5 480.4 H298" stroke="#4a4a4a" stroke-width="1"/><path d="M292.5 490.9 H298" stroke="#4a4a4a" stroke-width="1"/><path d="M292.5 501.4 H298" stroke="#4a4a4a" stroke-width="1"/><path d="M292.5 511.9 H298" stroke="#4a4a4a" stroke-width="1"/><path d="M292.5 522.4 H298" stroke="#4a4a4a" stroke-width="1"/><path d="M292.5 532.9 H298" stroke="#4a4a4a" stroke-width="1"/><path d="M292.5 543.4 H298" stroke="#4a4a4a" stroke-width="1"/><path d="M292.5 553.9 H298" stroke="#4a4a4a" stroke-width="1"/><path d="M292.5 564.4 H298" stroke="#4a4a4a" stroke-width="1"/><path d="M292.3 426.2H298.4" stroke="#060606" stroke-width="1.1"/></svg>
<svg style="left:292px;top:0" width="434" height="5" viewBox="292 0 434 5">
<rect x="318" y="0" width="2.6" height="1.2" fill="#ccc"/><rect x="322.6" y="0" width="2.6" height="1.2" fill="#ccc"/>
<path d="M501 0 V3 H498 Z" fill="#ddd"/>
<rect x="514.1" y="0" width="16.5" height="1.1" fill="#cfcfcf"/><rect x="542.9" y="0" width="16.5" height="1.1" fill="#cfcfcf"/>
<rect x="574.6" y="0" width="18.8" height="1.1" fill="#cfcfcf"/><rect x="602.4" y="0" width="19" height="1.1" fill="#cfcfcf"/>
<rect x="629.8" y="0" width="20.5" height="1.3" fill="#35b5b5"/>
<rect x="659.6" y="-1" width="26.4" height="4" rx="1.2" fill="#e8e8e8" stroke="#4a80c4" stroke-width="1.4"/>
<rect x="708.4" y="0" width="1.6" height="1.6" fill="#e8a020"/></svg>
<svg style="left:0;top:0" width="726" height="290" viewBox="0 0 726 290"><rect x="303" y="5.3" width="421.2" height="277.7" fill="#343434"/><path d="M303 7.9H724.2M303 18.4H724.2M303 28.9H724.2M303 39.4H724.2M303 49.9H724.2M303 60.4H724.2M303 70.9H724.2M303 81.4H724.2M303 91.9H724.2M303 102.4H724.2M303 112.9H724.2M303 123.4H724.2M303 133.9H724.2M303 154.9H724.2M303 165.4H724.2M303 175.9H724.2M303 186.4H724.2M303 196.9H724.2M303 207.4H724.2M303 217.9H724.2M303 228.4H724.2M303 238.9H724.2M303 249.4H724.2M303 259.9H724.2M303 270.4H724.2M303 280.9H724.2" stroke="#595959" stroke-width="1" fill="none"/><path d="M314.91 5.3V283M325.42 5.3V283M335.93 5.3V283M346.44 5.3V283M356.95 5.3V283M367.46 5.3V283M377.97 5.3V283M388.48 5.3V283M398.99 5.3V283M409.5 5.3V283M420.01 5.3V283M430.52 5.3V283M441.03 5.3V283M451.54 5.3V283M462.05 5.3V283M472.56 5.3V283M483.07 5.3V283M493.58 5.3V283M504.09 5.3V283M525.11 5.3V283M535.62 5.3V283M546.13 5.3V283M556.64 5.3V283M567.15 5.3V283M577.66 5.3V283M588.17 5.3V283M598.68 5.3V283M609.19 5.3V283M619.7 5.3V283M630.21 5.3V283M640.72 5.3V283M651.23 5.3V283M661.74 5.3V283M672.25 5.3V283M682.76 5.3V283M693.27 5.3V283M703.78 5.3V283M714.29 5.3V283M724.8 5.3V283" stroke="#5e5e5e" stroke-width="1" fill="none"/><path d="M292.3 144.4H724.2M514.6 5.3V283" stroke="#060606" stroke-width="1.1" fill="none"/><path d="M537.2 58.6V123" stroke="#808080" stroke-width="0.8"/><path d="M549 144.4H624.6" stroke="#c41c1c" stroke-width="1.1"/><rect x="526.5" y="123" width="22.2" height="22.1" fill="none" stroke="#3fe6e6" stroke-width="1.1"/><rect x="527.5" y="124" width="20.2" height="20.1" fill="none" stroke="#f2f2f2" stroke-width="0.9"/></svg>
<div class="l" style="left:537.2px;top:49.8px;height:10px;color:#868686;"><span class="fsans" style="font-size:9.4px;letter-spacing:0px;">z</span></div>
<div class="l" style="left:538.2px;top:137.2px;height:10px;color:#c41c1c;"><span class="fsans" style="font-size:9.6px;letter-spacing:0px;">y</span></div>
<div class="l" style="left:624.6px;top:137.6px;height:10px;color:#c41c1c;"><span class="fsans" style="font-size:9.6px;letter-spacing:0px;">x</span></div>
<div class="l" style="left:308.4px;top:12.6px;height:12px;color:#cacaca;"><span class="fsans" style="font-size:9.6px;letter-spacing:0.1px;">[+]</span></div>
<div class="l" style="left:327.7px;top:12.6px;height:12px;color:#cacaca;"><span class="fsans" style="font-size:8.6px;letter-spacing:-0.3px;">[</span><span class="fcjk" style="font-size:9px;letter-spacing:1.3px;">前</span><span class="fsans" style="font-size:8.6px;letter-spacing:-0.3px;">&nbsp;]</span></div>
<div class="l" style="left:351.9px;top:12.6px;height:12px;color:#cacaca;"><span class="fsans" style="font-size:8.6px;letter-spacing:-0.3px;">[</span><span class="fcjk" style="font-size:9px;letter-spacing:1.3px;">标准</span><span class="fsans" style="font-size:8.6px;letter-spacing:-0.3px;">&nbsp;]</span></div>
<div class="l" style="left:385.5px;top:12.6px;height:12px;color:#cacaca;"><span class="fsans" style="font-size:8.6px;letter-spacing:-0.3px;">[</span><span class="fcjk" style="font-size:9px;letter-spacing:1.3px;">线框</span><span class="fsans" style="font-size:8.6px;letter-spacing:-0.3px;">&nbsp;]</span></div>
<svg style="left:650px;top:28px" width="70" height="36" viewBox="650 28 70 36">
<ellipse cx="684.6" cy="56.6" rx="26" ry="2.4" fill="none" stroke="#6e6e6e" stroke-width="0.9"/>
<ellipse cx="684.6" cy="56.2" rx="19" ry="1.6" fill="none" stroke="#2a2a2a" stroke-width="0.8"/>
<rect x="675.2" y="34" width="21.3" height="21.2" fill="#8b8b8b"/><rect x="675.2" y="34" width="21.3" height="21.2" fill="none" stroke="#9a9a9a" stroke-width="0.6"/></svg>
<div class="l" style="left:680.2px;top:39px;height:12px;color:#5d6470;"><span class="fcjk" style="font-size:10.6px">前</span></div>
<svg style="left:312px;top:240px" width="40" height="32" viewBox="312 240 40 32">
<path d="M321.6 248.6V265" stroke="#1818d8" stroke-width="1.1"/><path d="M326.4 265H338.4" stroke="#c01818" stroke-width="1.1"/></svg>
<div class="l" style="left:322px;top:240.6px;height:10px;color:#2222e0;"><span class="fsans" style="font-size:11.4px;letter-spacing:0px;font-weight:bold;">z</span></div>
<div class="l" style="left:321.2px;top:258.2px;height:10px;color:#18a018;"><span class="fsans" style="font-size:11.4px;letter-spacing:0px;font-weight:bold;">y</span></div>
<div class="l" style="left:339.2px;top:258.6px;height:10px;color:#c81414;"><span class="fsans" style="font-size:11.4px;letter-spacing:0px;font-weight:bold;">x</span></div>
<div style="left:303px;top:286.8px;width:422.2px;height:279.2px;border:1.4px solid #8e7628;background:linear-gradient(180deg,#191919 0%,#4e4e4e 100%);"></div>
<div class="l" style="left:308.7px;top:294.4px;height:12px;color:#d2d2d2;"><span class="fsans" style="font-size:9.6px;letter-spacing:0.1px;">[+]</span></div>
<div class="l" style="left:326.9px;top:294.4px;height:12px;color:#d2d2d2;"><span class="fsans" style="font-size:8.6px;letter-spacing:-0.3px;">[</span><span class="fcjk" style="font-size:9px;letter-spacing:1.3px;">透视</span><span class="fsans" style="font-size:8.6px;letter-spacing:-0.3px;">&nbsp;]</span></div>
<div class="l" style="left:361.8px;top:294.4px;height:12px;color:#d2d2d2;"><span class="fsans" style="font-size:8.6px;letter-spacing:-0.3px;">[</span><span class="fcjk" style="font-size:9px;letter-spacing:1.3px;">标准</span><span class="fsans" style="font-size:8.6px;letter-spacing:-0.3px;">&nbsp;]</span></div>
<div class="l" style="left:395.1px;top:294.4px;height:12px;color:#d2d2d2;"><span class="fsans" style="font-size:8.6px;letter-spacing:-0.3px;">[</span><span class="fcjk" style="font-size:9px;letter-spacing:1.05px;">默认明暗处理</span><span class="fsans" style="font-size:8.6px;letter-spacing:-0.3px;">&nbsp;]</span></div>
<svg style="left:305px;top:525px" width="45" height="30" viewBox="305 525 45 30">
<path d="M321.4 533.4V547.4" stroke="#1818d8" stroke-width="1.1"/><path d="M314.6 543.4L321 547.2" stroke="#18a018" stroke-width="1.1"/><path d="M322 547.4L335.4 541.2" stroke="#c01818" stroke-width="1.1"/></svg>
<div class="l" style="left:322px;top:525.6px;height:10px;color:#2222e0;"><span class="fsans" style="font-size:11.4px;letter-spacing:0px;font-weight:bold;">z</span></div>
<div class="l" style="left:309.6px;top:534.4px;height:10px;color:#18a018;"><span class="fsans" style="font-size:11.4px;letter-spacing:0px;font-weight:bold;">y</span></div>
<div class="l" style="left:333.8px;top:534.4px;height:10px;color:#c81414;"><span class="fsans" style="font-size:11.4px;letter-spacing:0px;font-weight:bold;">x</span></div>
<svg style="left:0;top:0" width="726" height="571" viewBox="0 0 726 571"><defs><filter id="soft" x="-5%" y="-5%" width="110%" height="110%"><feGaussianBlur stdDeviation="0.35"/></filter></defs><polygon points="410.2,363.5 507.9,331 603.1,363.2 506.3,408.4" fill="#fdfee6"/><polygon points="410.2,363.5 506.3,408.4 506.3,532.6 422.4,475.2" fill="#c3df86"/><polygon points="506.3,408.4 603.1,363.2 593.5,475.2 506.3,532.6" fill="#eefcc6"/><g filter="url(#soft)"><path d="M458.85 351.16 L479.66 344.11 L487.67 343.79 L503.61 349.72 L528.11 340.83 L532.65 341.07 L547.55 346.15 L548.55 347.84 L524.15 357.35 L567.33 373.4 L567.18 377.14 L546.61 386.63 L537.13 387.12 L493.65 369.25 L462.66 381.33 L457.3 380.99 L442.36 374.13 L442.18 372 L473.08 360.79 L457.17 354.25 Z" fill="#b8a654" stroke="#b8a654" stroke-width="1.6" stroke-linejoin="round" opacity="0.55"/><path d="M455.88 354.18 L457.58 351.09 L478.43 344.05 L486.44 343.73 L502.34 349.65 L471.75 360.72 Z" fill="#dfcf80" stroke="#b39d45" stroke-width="0.55"/><path d="M461.15 353.14 L461.97 351.6 L479.52 345.61 L483.56 345.45 L495.6 349.99 L473.17 358.02 Z" fill="#ceba60" stroke="#b39d45" stroke-width="0.5"/><path d="M465.22 350.49 L478.94 355.96" fill="none" stroke="#b39d45" stroke-width="0.6"/><path d="M470.87 348.56 L484.6 353.93" fill="none" stroke="#b39d45" stroke-width="0.6"/><path d="M476.42 346.67 L490.15 351.94" fill="none" stroke="#b39d45" stroke-width="0.6"/><path d="M440.96 374.05 L440.79 371.92 L471.75 360.72 L492.27 369.17 L461.22 381.24 L455.86 380.91 Z" fill="#dfcf80" stroke="#b39d45" stroke-width="0.55"/><path d="M447.24 373.01 L447.13 371.95 L470.29 363.48 L484.89 369.58 L461.68 378.51 L459.02 378.34 Z" fill="#ceba60" stroke="#b39d45" stroke-width="0.5"/><path d="M449.46 374.01 L473.87 364.98" fill="none" stroke="#b39d45" stroke-width="0.6"/><path d="M453.07 375.65 L477.5 366.49" fill="none" stroke="#b39d45" stroke-width="0.6"/><path d="M456.73 377.31 L481.17 368.03" fill="none" stroke="#b39d45" stroke-width="0.6"/><path d="M502.34 349.65 L526.89 340.77 L531.42 341.01 L546.3 346.09 L547.28 347.77 L522.84 357.28 Z" fill="#dfcf80" stroke="#b39d45" stroke-width="0.55"/><path d="M509.06 349.31 L527.12 342.71 L529.41 342.84 L541.17 346.9 L541.64 347.74 L523.63 354.67 Z" fill="#ceba60" stroke="#b39d45" stroke-width="0.5"/><path d="M512.64 350.63 L531.62 343.6" fill="none" stroke="#b39d45" stroke-width="0.6"/><path d="M516.26 351.96 L535.23 344.85" fill="none" stroke="#b39d45" stroke-width="0.6"/><path d="M519.93 353.31 L538.88 346.11" fill="none" stroke="#b39d45" stroke-width="0.6"/><path d="M471.75 360.72 L502.34 349.65 L522.84 357.28 L492.27 369.17 Z" fill="#dfcf80" stroke="#b39d45" stroke-width="0.55"/><path d="M478.88 360.34 L501.31 352.14 L515.9 357.65 L493.49 366.27 Z" fill="#ceba60" stroke="#b39d45" stroke-width="0.5"/><path d="M478.88 360.34 L484.58 358.26 L512.33 356.3 L515.9 357.65 L510.53 359.71 L482.33 361.74 Z" fill="#dfcf80" stroke="#b39d45" stroke-width="0.45"/><path d="M501.31 352.14 L504.76 353.44 L499.18 364.08 L493.49 366.27 L489.91 364.82 L495.94 354.11 Z" fill="#dfcf80" stroke="#b39d45" stroke-width="0.45"/><path d="M492.27 369.17 L522.84 357.28 L545.08 365.57 L514.62 378.38 Z" fill="#dfcf80" stroke="#b39d45" stroke-width="0.55"/><path d="M499.61 368.76 L522.02 359.95 L537.95 365.96 L515.6 375.25 Z" fill="#ceba60" stroke="#b39d45" stroke-width="0.5"/><path d="M505.38 366.49 L521.36 372.86" fill="none" stroke="#b39d45" stroke-width="0.6"/><path d="M511.04 364.27 L527 370.51" fill="none" stroke="#b39d45" stroke-width="0.6"/><path d="M516.58 362.09 L532.53 368.22" fill="none" stroke="#b39d45" stroke-width="0.6"/><path d="M514.62 378.38 L545.08 365.57 L565.91 373.32 L565.74 377.06 L545.12 386.55 L535.64 387.03 Z" fill="#dfcf80" stroke="#b39d45" stroke-width="0.55"/><path d="M522.2 377.93 L544.51 368.44 L560.76 374.57 L560.64 376.44 L543.26 384.34 L538.56 384.58 Z" fill="#ceba60" stroke="#b39d45" stroke-width="0.5"/><path d="M522.2 377.93 L527.88 375.52 L558.81 373.83 L562.95 375.39 L557.65 377.8 L526.19 379.55 Z" fill="#dfcf80" stroke="#b39d45" stroke-width="0.45"/><path d="M544.51 368.44 L548.47 369.93 L546.41 382.9 L540.76 385.47 L536.59 383.78 L539.17 370.71 Z" fill="#dfcf80" stroke="#b39d45" stroke-width="0.45"/><path d="M446.1 388.41 L467.54 398.77 L472.77 406.63 L473.76 431.56 L500.75 446.08 L503.15 451.29 L503.23 472.22 L500.95 474.56 L474.87 459.22 L476.79 507.16 L472.56 508.32 L453.63 495.41 L449.3 488.61 L445.78 442.1 L422.12 428.18 L420.07 423.84 L418.08 404.92 L419.44 402.32 L443.77 415.41 L441.96 391.44 Z" fill="#857a2c" stroke="#857a2c" stroke-width="1.6" stroke-linejoin="round" opacity="0.55"/><path d="M441.34 390.14 L445.47 387.08 L466.89 397.39 L472.12 405.25 L473.14 430.22 L443.17 414.15 Z" fill="#b6a748" stroke="#75671a" stroke-width="0.55"/><path d="M445.23 393.56 L447.32 392.06 L465.42 400.91 L468.01 404.81 L468.88 423.96 L446.57 412.15 Z" fill="#a29232" stroke="#75671a" stroke-width="0.5"/><path d="M450.57 393.65 L451.97 415.01" fill="none" stroke="#75671a" stroke-width="0.6"/><path d="M456.21 396.41 L457.49 417.93" fill="none" stroke="#75671a" stroke-width="0.6"/><path d="M461.99 399.23 L463.12 420.91" fill="none" stroke="#75671a" stroke-width="0.6"/><path d="M417.51 403.72 L418.87 401.11 L443.17 414.15 L445.21 440.89 L421.56 427.02 L419.52 422.67 Z" fill="#b6a748" stroke="#75671a" stroke-width="0.55"/><path d="M421.02 407.52 L421.72 406.23 L439.85 416.09 L441.38 435.14 L423.59 424.83 L422.57 422.63 Z" fill="#a29232" stroke="#75671a" stroke-width="0.5"/><path d="M421.32 410.48 L440.24 420.94" fill="none" stroke="#75671a" stroke-width="0.6"/><path d="M421.8 415.15 L440.63 425.72" fill="none" stroke="#75671a" stroke-width="0.6"/><path d="M422.27 419.76 L441.01 430.46" fill="none" stroke="#75671a" stroke-width="0.6"/><path d="M473.14 430.22 L500.1 444.68 L502.49 449.89 L502.59 470.86 L500.32 473.21 L474.27 457.93 Z" fill="#b6a748" stroke="#75671a" stroke-width="0.55"/><path d="M477.42 436.52 L496.83 447.07 L498.02 449.65 L498.19 466.22 L497.07 467.42 L478.13 456.44 Z" fill="#a29232" stroke="#75671a" stroke-width="0.5"/><path d="M477.6 441.59 L498.05 452.9" fill="none" stroke="#75671a" stroke-width="0.6"/><path d="M477.78 446.6 L498.1 458.02" fill="none" stroke="#75671a" stroke-width="0.6"/><path d="M477.95 451.55 L498.16 463.08" fill="none" stroke="#75671a" stroke-width="0.6"/><path d="M443.17 414.15 L473.14 430.22 L474.27 457.93 L445.21 440.89 Z" fill="#b6a748" stroke="#75671a" stroke-width="0.55"/><path d="M447.14 420.05 L469.25 432.08 L470.15 451.81 L448.52 439.27 Z" fill="#a29232" stroke="#75671a" stroke-width="0.5"/><path d="M447.14 420.05 L452.2 422.81 L469.94 447.24 L470.15 451.81 L464.87 448.75 L447.47 424.67 Z" fill="#b6a748" stroke="#75671a" stroke-width="0.45"/><path d="M469.25 432.08 L469.47 436.82 L453.48 442.15 L448.52 439.27 L448.2 434.82 L463.85 429.14 Z" fill="#b6a748" stroke="#75671a" stroke-width="0.45"/><path d="M445.21 440.89 L474.27 457.93 L475.35 484.37 L447.16 466.5 Z" fill="#b6a748" stroke="#75671a" stroke-width="0.55"/><path d="M449.05 446.67 L470.5 459.39 L471.37 478.4 L450.38 465.22 Z" fill="#a29232" stroke="#75671a" stroke-width="0.5"/><path d="M454.25 449.75 L455.47 468.42" fill="none" stroke="#75671a" stroke-width="0.6"/><path d="M459.56 452.9 L460.67 471.68" fill="none" stroke="#75671a" stroke-width="0.6"/><path d="M464.97 456.11 L465.96 475" fill="none" stroke="#75671a" stroke-width="0.6"/><path d="M447.16 466.5 L475.35 484.37 L476.23 505.96 L472 507.14 L453.09 494.27 L448.75 487.47 Z" fill="#b6a748" stroke="#75671a" stroke-width="0.55"/><path d="M450.88 472.15 L471.69 485.48 L472.45 502.2 L470.37 502.82 L454.24 491.95 L452.06 488.52 Z" fill="#a29232" stroke="#75671a" stroke-width="0.5"/><path d="M450.88 472.15 L455.66 475.21 L472.37 500.31 L472.55 504.3 L467.6 500.95 L451.17 476.2 Z" fill="#b6a748" stroke="#75671a" stroke-width="0.45"/><path d="M471.69 485.48 L471.88 489.62 L456.88 493.72 L452.2 490.57 L451.92 486.67 L466.62 482.23 Z" fill="#b6a748" stroke="#75671a" stroke-width="0.45"/><path d="M546.13 398.03 L567.7 387.66 L571.99 390.54 L570.59 414.06 L595.55 400.88 L597.04 403.44 L595.47 422.31 L593.44 426.67 L569 440.64 L566.18 487.96 L561.74 494.89 L542.13 507.76 L537.74 506.43 L539.29 457.63 L512.95 472.69 L510.66 470.32 L510.75 449.52 L513.13 444.39 L540.17 430.12 L540.95 405.72 Z" fill="#b0a050" stroke="#b0a050" stroke-width="1.6" stroke-linejoin="round" opacity="0.55"/><path d="M540.37 404.96 L545.57 397.26 L567.21 386.9 L571.51 389.79 L570.11 413.37 L539.61 429.42 Z" fill="#d4c26a" stroke="#a08c38" stroke-width="0.55"/><path d="M544.53 404.48 L547.1 400.66 L565.4 391.77 L567.58 393.19 L566.56 411.44 L543.87 423.23 Z" fill="#c3af54" stroke="#a08c38" stroke-width="0.5"/><path d="M550.56 398.98 L549.7 420.2" fill="none" stroke="#a08c38" stroke-width="0.6"/><path d="M556.39 396.15 L555.43 417.22" fill="none" stroke="#a08c38" stroke-width="0.6"/><path d="M562.11 393.37 L561.05 414.3" fill="none" stroke="#a08c38" stroke-width="0.6"/><path d="M510.1 448.83 L512.49 443.69 L539.61 429.42 L538.74 457.01 L512.33 472.07 L510.03 469.69 Z" fill="#d4c26a" stroke="#a08c38" stroke-width="0.55"/><path d="M514.59 448.61 L515.78 446.07 L535.32 435.65 L534.78 455.48 L515.59 466.3 L514.46 465.09 Z" fill="#c3af54" stroke="#a08c38" stroke-width="0.5"/><path d="M514.57 451.83 L535.18 440.68" fill="none" stroke="#a08c38" stroke-width="0.6"/><path d="M514.53 456.92 L535.05 445.66" fill="none" stroke="#a08c38" stroke-width="0.6"/><path d="M514.49 461.96 L534.91 450.59" fill="none" stroke="#a08c38" stroke-width="0.6"/><path d="M570.11 413.37 L595.13 400.2 L596.63 402.77 L595.07 421.68 L593.03 426.05 L568.54 440.02 Z" fill="#d4c26a" stroke="#a08c38" stroke-width="0.55"/><path d="M573.59 415.26 L592.29 405.3 L593.05 406.58 L591.85 421.65 L590.82 423.86 L572.41 434.25 Z" fill="#c3af54" stroke="#a08c38" stroke-width="0.5"/><path d="M573.29 420.07 L592.82 409.52" fill="none" stroke="#a08c38" stroke-width="0.6"/><path d="M573 424.84 L592.45 414.17" fill="none" stroke="#a08c38" stroke-width="0.6"/><path d="M572.7 429.56 L592.08 418.78" fill="none" stroke="#a08c38" stroke-width="0.6"/><path d="M539.61 429.42 L570.11 413.37 L568.54 440.02 L538.74 457.01 Z" fill="#d4c26a" stroke="#a08c38" stroke-width="0.55"/><path d="M543.59 431.25 L566.12 419.24 L565.06 438.39 L542.9 450.9 Z" fill="#c3af54" stroke="#a08c38" stroke-width="0.5"/><path d="M543.59 431.25 L549.07 428.33 L565.31 433.93 L565.06 438.39 L559.96 441.27 L543.42 435.95 Z" fill="#d4c26a" stroke="#a08c38" stroke-width="0.45"/><path d="M566.12 419.24 L565.87 423.83 L548.29 447.85 L542.9 450.9 L543.06 446.32 L560.94 422 Z" fill="#d4c26a" stroke="#a08c38" stroke-width="0.45"/><path d="M538.74 457.01 L568.54 440.02 L567 465.93 L537.91 483.76 Z" fill="#d4c26a" stroke="#a08c38" stroke-width="0.55"/><path d="M542.63 458.5 L564.64 445.82 L563.6 464.59 L541.95 477.73 Z" fill="#c3af54" stroke="#a08c38" stroke-width="0.5"/><path d="M548.29 455.24 L547.51 474.36" fill="none" stroke="#a08c38" stroke-width="0.6"/><path d="M553.84 452.04 L552.97 471.04" fill="none" stroke="#a08c38" stroke-width="0.6"/><path d="M559.29 448.9 L558.33 467.79" fill="none" stroke="#a08c38" stroke-width="0.6"/><path d="M537.91 483.76 L567 465.93 L565.73 487.44 L561.28 494.39 L541.62 507.26 L537.21 505.92 Z" fill="#d4c26a" stroke="#a08c38" stroke-width="0.55"/><path d="M541.7 484.96 L563.2 471.65 L562.27 488.46 L560.02 491.96 L543.28 502.83 L541.1 502.14 Z" fill="#c3af54" stroke="#a08c38" stroke-width="0.5"/><path d="M541.7 484.96 L546.93 481.72 L562.37 486.55 L562.15 490.58 L557.28 493.74 L541.55 489.2 Z" fill="#d4c26a" stroke="#a08c38" stroke-width="0.45"/><path d="M563.2 471.65 L562.97 475.8 L546.15 500.97 L541.02 504.3 L541.17 500.19 L558.25 474.72 Z" fill="#d4c26a" stroke="#a08c38" stroke-width="0.45"/></g><polygon points="409,362.8 507.9,329.9 604.2,362 594.3,476.2 506.3,533.8 421.5,476" fill="none" stroke="#3fe6e6" stroke-width="1.7" stroke-linejoin="round"/><path d="M507.5 398.6V474" stroke="#777" stroke-width="1"/><path d="M507.5 474.6L565 442.4M507.5 474.6L455.4 443.6" stroke="#d01818" stroke-width="0.9" fill="none"/></svg>
<div class="l" style="left:507.2px;top:389.4px;height:10px;color:#1c1c1c;"><span class="fsans" style="font-size:10px;letter-spacing:0px;">z</span></div>
<div class="l" style="left:451.4px;top:436.6px;height:10px;color:#d01818;"><span class="fsans" style="font-size:9.6px;letter-spacing:0px;font-weight:bold;">y</span></div>
<div class="l" style="left:562.4px;top:435.6px;height:10px;color:#d01818;"><span class="fsans" style="font-size:9.6px;letter-spacing:0px;font-weight:bold;">x</span></div>
<svg style="left:655px;top:305px" width="60" height="55" viewBox="655 305 60 55">
<defs><filter id="vb" x="-10%" y="-10%" width="120%" height="120%"><feGaussianBlur stdDeviation="0.45"/></filter></defs>
<g filter="url(#vb)">
<ellipse cx="685.7" cy="338.8" rx="20.6" ry="9.6" fill="#141414" opacity=".55"/>
<ellipse cx="685.7" cy="338.7" rx="22.7" ry="11.2" fill="none" stroke="#777a80" stroke-width="4"/>
<path d="M671.6 318.2 L685.7 311.9 L699.8 318.2 L698.3 335.2 L685.7 342.4 L673 335.8 Z" fill="#8a8a8a"/>
<path d="M671.6 318.2 L685.7 311.9 L699.8 318.2 L685.1 323.9 Z" fill="#919191"/>
<path d="M685.1 323.9 L699.8 318.2 L698.3 335.2 L685.7 342.4 Z" fill="#818181"/>
<path d="M671.6 318.2 L685.1 323.9 L685.7 342.4 L673 335.8 Z" fill="#8b8b8b"/>
<circle cx="685.4" cy="324.6" r="1.6" fill="#7d828c"/>
<path d="M682.6 316.6 L686.6 318.6 M686.6 316.4 L683.6 319.2 M676.6 329 L680.6 327 L680.6 333 M678 330 L677.4 333.4 M690.6 329.4 L694.6 327 L694.6 332.6 M690.6 329.4 V334.6" stroke="#6f7684" stroke-width="0.7" fill="none"/>
</g>
<path d="M663.4 346.6 L661.6 349.4 M666 347.6 L664.8 350.6 M706.4 347.2 L708.2 350 M703.8 348 L705 351 M668 327 L669.6 329 M703 326.6 L701.6 328.6" stroke="#8a8d92" stroke-width="0.6"/>
</svg>
</body></html>
